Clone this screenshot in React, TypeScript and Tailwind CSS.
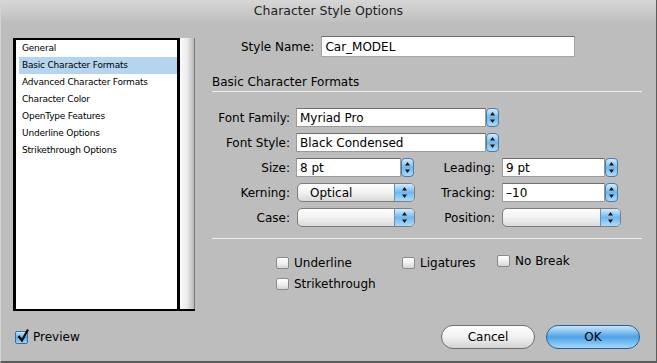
import React from "react";

const items = [
  "General",
  "Basic Character Formats",
  "Advanced Character Formats",
  "Character Color",
  "OpenType Features",
  "Underline Options",
  "Strikethrough Options",
];

function Arrows({ w, h }: { w: number; h: number }) {
  const cx = w / 2;
  const mid = h / 2;
  return (
    <svg width={w} height={h} className="block">
      <path d={`M${cx - 2.5} ${mid - 2} L${cx + 2.5} ${mid - 2} L${cx} ${mid - 5.5} Z`} fill="#111" />
      <path d={`M${cx - 2.5} ${mid + 2} L${cx + 2.5} ${mid + 2} L${cx} ${mid + 5.5} Z`} fill="#111" />
    </svg>
  );
}

function Stepper() {
  return (
    <div className="w-[13px] h-[19px] rounded-[4px] border border-[#4c79a6] bg-gradient-to-b from-[#d4ecfc] via-[#6fb8ee] to-[#a9dcfb] shrink-0">
      <Arrows w={11} h={17} />
    </div>
  );
}

function Combo({ value, width }: { value: string; width: number }) {
  return (
    <div className="flex items-center">
      <div
        className="h-[19px] bg-white border border-[#9a9a9a] border-t-[#6e6e6e] flex items-center pl-[3px] text-[12px] text-black"
        style={{ width }}
      >
        {value}
      </div>
      <Stepper />
    </div>
  );
}

function Popup({ value, width }: { value: string; width: number }) {
  return (
    <div
      className="h-[19px] rounded-[5px] border border-[#7d7d7d] bg-gradient-to-b from-white via-[#f2f2f2] to-[#d9d9d9] flex items-center overflow-hidden"
      style={{ width }}
    >
      <div className="flex-1 pl-[12px] text-[12px] text-black">{value}</div>
      <div className="w-[20px] h-full border-l border-[#6a8fb5] bg-gradient-to-b from-[#d4ecfc] via-[#6fb8ee] to-[#a9dcfb]">
        <Arrows w={19} h={17} />
      </div>
    </div>
  );
}

function Check({ label, checked = false }: { label: string; checked?: boolean }) {
  return (
    <div className="flex items-center gap-[5px] h-[15px]">
      {checked ? (
        <div className="w-[13px] h-[13px] rounded-[2px] border border-[#3d6a98] bg-gradient-to-b from-[#c8e6fb] via-[#5aa9e6] to-[#9fd4f8] relative">
          <svg width="15" height="15" className="absolute -top-[4px] left-0">
            <path d="M2.5 8 L6 12.5 L12 1.5" stroke="#0a0a0a" strokeWidth="2.2" fill="none" />
          </svg>
        </div>
      ) : (
        <div className="w-[13px] h-[12px] rounded-[2px] border border-[#8a8a8a] bg-gradient-to-b from-white via-[#f0f0f0] to-[#d6d6d6]" />
      )}
      <span className="text-[12px] text-black leading-none">{label}</span>
    </div>
  );
}

export default function App() {
  return (
    <div
      className="w-[657px] h-[363px] bg-[#bdbdbd] flex flex-col border-b-2 border-r border-[#5c5c5c] border-l border-l-[#d4d4d4] overflow-hidden"
      style={{ fontFamily: "'DejaVu Sans', sans-serif" }}
    >
      {/* Title bar */}
      <div className="h-[22px] shrink-0 bg-gradient-to-b from-[#d6d6d6] to-[#c0c0c0] flex items-center justify-center text-[12.5px] text-[#222]">
        Character Style Options
      </div>

      {/* Main */}
      <div className="h-[289px] shrink-0 flex pt-[14px] pl-[12px]">
        {/* Sidebar list */}
        <div className="mt-[2px] w-[182px] h-[273px] border-b-2 border-black flex">
          <div className="flex-1 bg-white border-l-[3px] border-t-2 border-r-[3px] border-black pl-[3px]">
            {items.map((it, i) => (
              <div
                key={it}
                className={`h-[17px] flex items-center pl-[3px] text-[9px] tracking-[-0.2px] text-black ${
                  i === 1 ? "bg-[#b4d4f0]" : ""
                }`}
              >
                {it}
              </div>
            ))}
          </div>
          <div className="w-[15px] border-r border-[#7a7a7a] bg-gradient-to-r from-[#fafafa] via-[#ececec] to-[#b8b8b8]" />
        </div>

        {/* Right panel */}
        <div className="ml-[17px] w-[430px] flex flex-col text-[12px] text-black">
          <div className="flex items-center h-[21px] pl-[29px] gap-[7px]">
            <span>Style Name:</span>
            <div className="w-[254px] h-[21px] bg-white border border-[#a5a5a5] border-t-[#6e6e6e] flex items-center pl-[3px]">
              Car_MODEL
            </div>
          </div>

          <div className="mt-[17px] h-[16px] flex items-center">Basic Character Formats</div>
          <div className="mt-px h-px bg-[#ededed]" />

          <div className="mt-[16px] flex flex-col gap-[6px]">
            <div className="flex items-center h-[19px]">
              <span className="w-[78px] text-right">Font Family:</span>
              <div className="ml-[6px]">
                <Combo value="Myriad Pro" width={190} />
              </div>
            </div>
            <div className="flex items-center h-[19px]">
              <span className="w-[78px] text-right">Font Style:</span>
              <div className="ml-[6px]">
                <Combo value="Black Condensed" width={190} />
              </div>
            </div>
            <div className="flex items-center h-[19px]">
              <span className="w-[78px] text-right">Size:</span>
              <div className="ml-[6px]">
                <Combo value="8 pt" width={105} />
              </div>
              <span className="w-[81px] text-right">Leading:</span>
              <div className="ml-[7px]">
                <Combo value="9 pt" width={103} />
              </div>
            </div>
            <div className="flex items-center h-[19px]">
              <span className="w-[78px] text-right">Kerning:</span>
              <div className="ml-[7px]">
                <Popup value="Optical" width={118} />
              </div>
              <span className="w-[80px] text-right">Tracking:</span>
              <div className="ml-[7px]">
                <Combo value="–10" width={103} />
              </div>
            </div>
            <div className="flex items-center h-[19px]">
              <span className="w-[78px] text-right">Case:</span>
              <div className="ml-[7px]">
                <Popup value="" width={118} />
              </div>
              <span className="w-[80px] text-right">Position:</span>
              <div className="ml-[7px]">
                <Popup value="" width={119} />
              </div>
            </div>
          </div>

          <div className="mt-[11px] h-px bg-[#ededed]" />

          <div className="mt-[16px] flex flex-col gap-[6px] pl-[64px]">
            <div className="flex">
              <div className="w-[126px]">
                <Check label="Underline" />
              </div>
              <div className="w-[95px]">
                <Check label="Ligatures" />
              </div>
              <div className="-mt-[2px]">
                <Check label="No Break" />
              </div>
            </div>
            <Check label="Strikethrough" />
          </div>
        </div>
      </div>

      {/* Bottom bar */}
      <div className="mt-[14px] h-[24px] flex items-center pl-[14px] pr-[16px]">
        <Check label="Preview" checked />
        <div className="ml-auto flex gap-[11px]">
          <button className="w-[94px] h-[24px] rounded-full border border-[#6f6f6f] bg-gradient-to-b from-white via-[#f1f1f1] to-[#d3d3d3] text-[12px] text-black">
            Cancel
          </button>
          <button className="w-[94px] h-[24px] rounded-full border border-[#2f5f93] bg-gradient-to-b from-[#c9e6fb] via-[#4aa2e6] to-[#a2d8fb] text-[12px] text-black">
            OK
          </button>
        </div>
      </div>
    </div>
  );
}
